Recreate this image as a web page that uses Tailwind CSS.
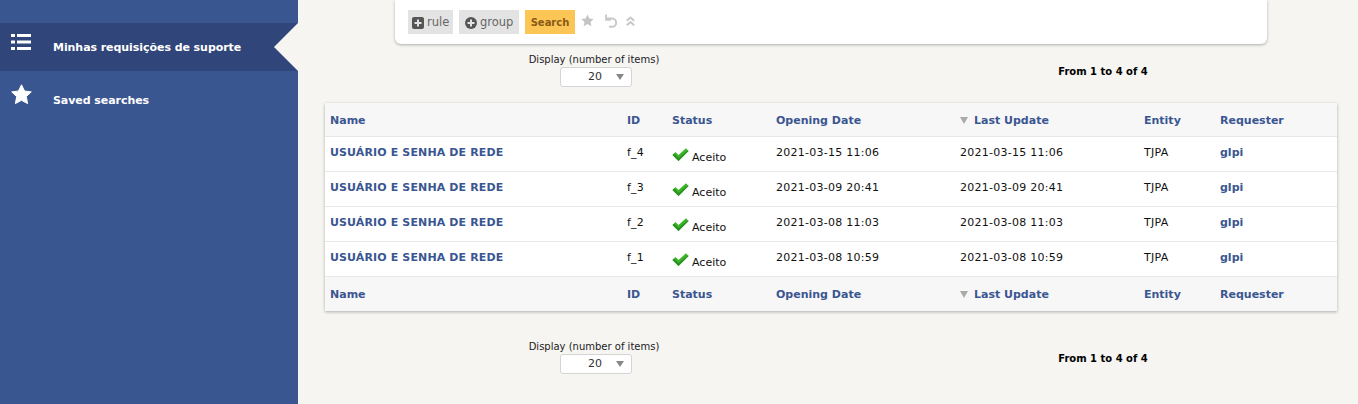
<!DOCTYPE html>
<html>
<head>
<meta charset="utf-8">
<script src="https://cdn.jsdelivr.net/npm/@tailwindcss/browser@4"></script>
</head>
<body class="bg-[#f6f5f2] font-['DejaVu_Sans',sans-serif] text-[11px] text-[#111] overflow-hidden">
<div class="flex h-[404px] w-[1358px] overflow-hidden">
  <aside class="w-[298px] shrink-0 bg-[#3a5691] pt-[23px] text-white font-bold">
    <div class="relative flex h-[48px] bg-[#30457a]">
      <svg class="ml-[11px] mt-[11px] shrink-0" width="20" height="16" viewBox="0 0 20 16" fill="#fff"><rect x="0" y="0" width="4" height="3"/><rect x="6" y="0" width="14" height="3"/><rect x="0" y="6.500" width="4" height="3"/><rect x="6" y="6.500" width="14" height="3"/><rect x="0" y="13" width="4" height="3"/><rect x="6" y="13" width="14" height="3"/></svg>
      <span class="ml-[22px] mt-[18px] leading-[14px] tracking-[-0.06px]">Minhas requisições de suporte</span>
      <svg class="absolute right-0 top-0" width="24" height="48" viewBox="0 0 24 48"><path d="M24 0 L0 24 L24 48 Z" fill="#f6f5f2"/></svg>
    </div>
    <div class="flex">
      <svg class="ml-[11px] mt-[13px] shrink-0" width="21" height="21" viewBox="0 0 21 21"><path d="M10.500 0.800 L13.500 7 L20.300 7.900 L15.300 12.600 L16.600 19.600 L10.500 16.300 L4.400 19.600 L5.700 12.600 L0.700 7.900 L7.500 7 Z" fill="#fff" stroke="#fff" stroke-width="1" stroke-linejoin="round"/></svg>
      <span class="ml-[21px] mt-[23px] leading-[14px] tracking-[-0.06px]">Saved searches</span>
    </div>
  </aside>
  <main class="flex-1 min-w-0">
    <section class="ml-[97px] flex h-[44px] w-[872px] items-start rounded-b-[6px] bg-white pl-[13px] pt-[10px] shadow-[0_1px_3px_rgba(0,0,0,0.3)] text-[11.5px]">
      <span class="flex h-[24px] w-[45px] items-center gap-[3px] bg-[#e3e3e3] pl-[4px] pt-px text-[#666]">
        <svg class="shrink-0" width="12" height="12" viewBox="0 0 12 12"><rect width="12" height="12" rx="2" fill="#555"/><path d="M6 2.500V9.500M2.500 6H9.500" stroke="#e3e3e3" stroke-width="2"/></svg>rule</span>
      <span class="ml-[6px] flex h-[24px] w-[60px] items-center gap-[3px] bg-[#e3e3e3] pl-[6px] pt-px text-[#666]">
        <svg class="shrink-0" width="12" height="12" viewBox="0 0 12 12"><circle cx="6" cy="6" r="6" fill="#555"/><path d="M6 2.500V9.500M2.500 6H9.500" stroke="#e3e3e3" stroke-width="2"/></svg>group</span>
      <span class="ml-[6px] flex h-[24px] w-[50px] items-center justify-center bg-[#fbc655] pt-px font-bold text-[#8a5a14] text-[10px]">Search</span>
      <svg class="ml-[6px] mt-[4px] shrink-0" width="13" height="13" viewBox="0 0 14 14"><path d="M7 0.500 L9 4.800 L13.700 5.400 L10.200 8.600 L11.200 13.300 L7 10.900 L2.800 13.300 L3.800 8.600 L0.300 5.400 L5 4.800 Z" fill="#c4c4c4"/></svg>
      <svg class="ml-[10px] mt-[4px] shrink-0" width="14" height="14" viewBox="0 0 14 14" fill="none" stroke="#c8c8c8" stroke-width="2"><path d="M3 4.500H8A4 4 0 0 1 8 12.800H5"/><path d="M2 0.500V5.800H7" stroke-width="1.800"/></svg>
      <svg class="ml-[8px] mt-[6px] shrink-0" width="9" height="10" viewBox="0 0 9 10" fill="none" stroke="#c8c8c8" stroke-width="2"><path d="M0.800 4.800L4.500 1.500L8.200 4.800M0.800 9.300L4.500 6L8.200 9.300"/></svg>
    </section>

    <div class="ml-[27px] mt-[8px] flex h-[51px] w-[1012px] text-[10px]">
      <div class="ml-[203px] flex w-[132px] flex-col items-center">
        <span class="mt-px leading-[14px] whitespace-nowrap text-[#222]">Display (number of items)</span>
        <span class="relative ml-[4px] flex h-[20px] w-[72px] items-center rounded-[3px] border border-[#d4d4d4] bg-white pl-[27px] text-[11px] text-[#333]">20<i class="absolute right-[7px] top-[6px] h-0 w-0 border-x-[4px] border-t-[6px] border-x-transparent border-t-[#888]"></i></span>
      </div>
      <div class="ml-[398px] mt-[13px] w-[90px] whitespace-nowrap text-center font-bold leading-[14px] text-black">From 1 to 4 of 4</div>
    </div>

    <div class="ml-[27px] w-[1012px] bg-white shadow-[0_1px_3px_rgba(0,0,0,0.3)]">
      <table class="w-[1012px] table-fixed border-collapse text-left">
        <colgroup><col class="w-[297px]"><col class="w-[45px]"><col class="w-[104px]"><col class="w-[184px]"><col class="w-[184px]"><col class="w-[76px]"><col class="w-[122px]"></colgroup>
        <thead>
          <tr class="h-[33px] border-b border-[#e8e8e8] bg-[#f7f7f7] font-bold text-[#3a5691]">
            <th class="px-[5px] pt-[3px]">Name</th><th class="px-[5px] pt-[3px]">ID</th><th class="px-[5px] pt-[3px]">Status</th><th class="px-[5px] pt-[3px]">Opening Date</th>
            <th class="px-[5px] pt-[3px]"><i class="mr-[6px] inline-block h-0 w-0 border-x-[4px] border-t-[7px] border-x-transparent border-t-[#aaa]"></i>Last Update</th>
            <th class="px-[5px] pt-[3px]">Entity</th><th class="px-[5px] pt-[3px]">Requester</th>
          </tr>
        </thead>
        <tbody class="tracking-[0.25px]">
          <tr class="h-[35px] border-b border-[#e8e8e8]">
            <td class="px-[5px] font-bold tracking-[0.13px] text-[#3a5691]">USUÁRIO E SENHA DE REDE</td><td class="px-[5px]">f_4</td>
            <td class="px-[5px] pt-[2px] tracking-normal"><span class="flex items-center"><svg width="17" height="15" viewBox="0 0 17 14" class="mt-[-1px] shrink-0"><path d="M0.500 7.500L3.500 4.500L6.500 7.500L14 0.800L16.500 3.500L6.500 13.500Z" fill="#3db52a"/><path d="M0.500 7.500L2 6L6.500 10.500L16 2.800L16.500 3.500L6.500 13.500Z" fill="#2b9020"/></svg><span class="ml-[3px] mt-[8px]">Aceito</span></span></td>
            <td class="px-[5px]">2021-03-15 11:06</td><td class="px-[5px]">2021-03-15 11:06</td><td class="px-[5px]">TJPA</td><td class="px-[5px] font-bold tracking-normal text-[#3a5691]">glpi</td>
          </tr>
          <tr class="h-[35px] border-b border-[#e8e8e8]">
            <td class="px-[5px] font-bold tracking-[0.13px] text-[#3a5691]">USUÁRIO E SENHA DE REDE</td><td class="px-[5px]">f_3</td>
            <td class="px-[5px] pt-[2px] tracking-normal"><span class="flex items-center"><svg width="17" height="15" viewBox="0 0 17 14" class="mt-[-1px] shrink-0"><path d="M0.500 7.500L3.500 4.500L6.500 7.500L14 0.800L16.500 3.500L6.500 13.500Z" fill="#3db52a"/><path d="M0.500 7.500L2 6L6.500 10.500L16 2.800L16.500 3.500L6.500 13.500Z" fill="#2b9020"/></svg><span class="ml-[3px] mt-[8px]">Aceito</span></span></td>
            <td class="px-[5px]">2021-03-09 20:41</td><td class="px-[5px]">2021-03-09 20:41</td><td class="px-[5px]">TJPA</td><td class="px-[5px] font-bold tracking-normal text-[#3a5691]">glpi</td>
          </tr>
          <tr class="h-[35px] border-b border-[#e8e8e8]">
            <td class="px-[5px] font-bold tracking-[0.13px] text-[#3a5691]">USUÁRIO E SENHA DE REDE</td><td class="px-[5px]">f_2</td>
            <td class="px-[5px] pt-[2px] tracking-normal"><span class="flex items-center"><svg width="17" height="15" viewBox="0 0 17 14" class="mt-[-1px] shrink-0"><path d="M0.500 7.500L3.500 4.500L6.500 7.500L14 0.800L16.500 3.500L6.500 13.500Z" fill="#3db52a"/><path d="M0.500 7.500L2 6L6.500 10.500L16 2.800L16.500 3.500L6.500 13.500Z" fill="#2b9020"/></svg><span class="ml-[3px] mt-[8px]">Aceito</span></span></td>
            <td class="px-[5px]">2021-03-08 11:03</td><td class="px-[5px]">2021-03-08 11:03</td><td class="px-[5px]">TJPA</td><td class="px-[5px] font-bold tracking-normal text-[#3a5691]">glpi</td>
          </tr>
          <tr class="h-[35px] border-b border-[#e8e8e8]">
            <td class="px-[5px] font-bold tracking-[0.13px] text-[#3a5691]">USUÁRIO E SENHA DE REDE</td><td class="px-[5px]">f_1</td>
            <td class="px-[5px] pt-[2px] tracking-normal"><span class="flex items-center"><svg width="17" height="15" viewBox="0 0 17 14" class="mt-[-1px] shrink-0"><path d="M0.500 7.500L3.500 4.500L6.500 7.500L14 0.800L16.500 3.500L6.500 13.500Z" fill="#3db52a"/><path d="M0.500 7.500L2 6L6.500 10.500L16 2.800L16.500 3.500L6.500 13.500Z" fill="#2b9020"/></svg><span class="ml-[3px] mt-[8px]">Aceito</span></span></td>
            <td class="px-[5px]">2021-03-08 10:59</td><td class="px-[5px]">2021-03-08 10:59</td><td class="px-[5px]">TJPA</td><td class="px-[5px] font-bold tracking-normal text-[#3a5691]">glpi</td>
          </tr>
        </tbody>
        <tfoot>
          <tr class="h-[35px] bg-[#f7f7f7] font-bold text-[#3a5691]">
            <th class="px-[5px] pt-[3px]">Name</th><th class="px-[5px] pt-[3px]">ID</th><th class="px-[5px] pt-[3px]">Status</th><th class="px-[5px] pt-[3px]">Opening Date</th>
            <th class="px-[5px] pt-[3px]"><i class="mr-[6px] inline-block h-0 w-0 border-x-[4px] border-t-[7px] border-x-transparent border-t-[#aaa]"></i>Last Update</th>
            <th class="px-[5px] pt-[3px]">Entity</th><th class="px-[5px] pt-[3px]">Requester</th>
          </tr>
        </tfoot>
      </table>
    </div>

    <div class="ml-[27px] mt-[28px] flex h-[51px] w-[1012px] text-[10px]">
      <div class="ml-[203px] flex w-[132px] flex-col items-center">
        <span class="mt-px leading-[14px] whitespace-nowrap text-[#222]">Display (number of items)</span>
        <span class="relative ml-[4px] flex h-[20px] w-[72px] items-center rounded-[3px] border border-[#d4d4d4] bg-white pl-[27px] text-[11px] text-[#333]">20<i class="absolute right-[7px] top-[6px] h-0 w-0 border-x-[4px] border-t-[6px] border-x-transparent border-t-[#888]"></i></span>
      </div>
      <div class="ml-[398px] mt-[13px] w-[90px] whitespace-nowrap text-center font-bold leading-[14px] text-black">From 1 to 4 of 4</div>
    </div>
  </main>
</div>
</body>
</html>
